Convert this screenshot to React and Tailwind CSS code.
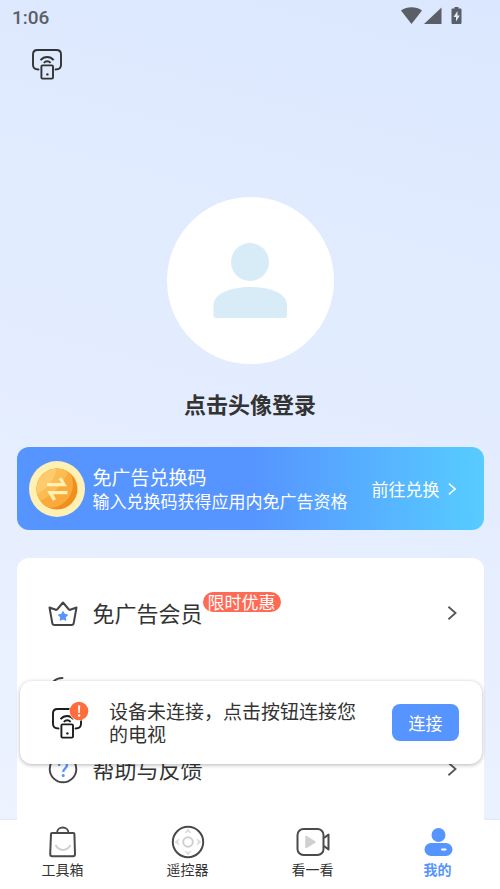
import clsx from 'clsx';

const CastIcon = ({ className }) => (
  <svg viewBox="0 0 32 32" fill="none" stroke="currentColor" strokeWidth="1.9" className={className}>
    <path d="M7.5 21.5C3.6 21.5 2 20 2 17V6.500C2 3.500 3.500 2 6.500 2h19C28.500 2 30 3.500 30 6.500V17c0 3-1.600 4.500-5.500 4.500" strokeLinecap="round" />
    <path d="M9.500 12.200c3.800-4.200 9.600-4.200 13.200 0" />
    <path d="M12.800 14.800c2-2 5-2 6.800 0" />
    <rect x="10.400" y="17.400" width="11.600" height="13.200" rx="1.200" />
    <circle cx="16.400" cy="26.400" r="1.200" fill="currentColor" stroke="none" />
  </svg>
);

const ChevronIcon = ({ className }) => (
  <svg viewBox="0 0 12 18" fill="none" stroke="currentColor" strokeWidth="2" className={className}>
    <path d="M2 2l8 7-8 7" />
  </svg>
);

const CoinIcon = () => (
  <svg viewBox="0 0 56 56" className="size-14 shrink-0">
    <defs>
      <clipPath id="coin-face">
        <circle cx="28" cy="28" r="20.500" />
      </clipPath>
    </defs>
    <circle cx="28" cy="28" r="28" fill="#fff0b3" />
    <g clipPath="url(#coin-face)">
      <rect width="56" height="56" fill="#f08f1d" />
      <circle cx="20" cy="23" r="24" fill="#f9aa3b" />
      <path d="M0 0h42C38 22 24 36 5 42z" fill="#fbbc54" />
      <path d="M0 0h29C28 16 20 28 6 34z" fill="#fdca6c" />
    </g>
    <path
      d="M18 25.200v-3.200h14.500l-3-4 3-1.500 5.500 8.700zM38.500 30v3.200H24.300l2.700 5-3 1.600-5.800-9.800z"
      fill="#fff0b3"
    />
  </svg>
);

const CrownIcon = () => (
  <svg viewBox="0 0 30 30" fill="none" className="size-[30px]">
    <path
      d="M1.500 9.500l6.300 2.300c.5.200 1 .1 1.300-.3L15 4.500l5.900 7c.3.400.8.500 1.300.3l6.300-2.300-2.800 15.600c-.2 1.200-.9 1.900-2.100 1.900H6.400c-1.200 0-1.900-.7-2.100-1.900z"
      stroke="#444"
      strokeWidth="2"
      strokeLinejoin="round"
    />
    <path
      d="M15 13.500l1.500 2.800 3.100.6-2.200 2.300.4 3.100-2.800-1.300-2.800 1.300.4-3.100-2.200-2.300 3.100-.6z"
      fill="#5694ff"
      stroke="#5694ff"
      strokeLinejoin="round"
    />
  </svg>
);

const HistoryIcon = () => (
  <svg viewBox="0 0 30 30" fill="none" stroke="#444" strokeWidth="1.900" strokeLinecap="round" className="size-[30px]">
    <path d="M14.500 2C7 2 1.500 7.500 1.500 15S7.500 28.500 15 28.500 28.500 22.500 28.500 15" />
  </svg>
);

const HelpIcon = () => (
  <svg viewBox="0 0 30 30" fill="none" strokeWidth="1.900" className="size-[30px]">
    <circle cx="15" cy="15" r="13.300" stroke="#444" />
    <path d="M11 12c0-5.300 8-5.300 8-.7 0 3-3.800 3.200-3.800 6.700" stroke="#5694ff" strokeWidth="2.200" />
    <circle cx="15.200" cy="21.500" r="1.500" fill="#5694ff" />
  </svg>
);

const BagIcon = () => (
  <svg viewBox="0 0 34 34" fill="none" stroke="#4a4a4a" strokeWidth="2" className="size-[34px]">
    <path d="M11 8c0-7.200 11.500-7.200 11.500 0" />
    <path d="M6 8h21.400c.6 0 1 .4 1 1l.6 20c0 1.500-.8 2.300-2 2.300H6.200c-1.200 0-2-.8-2-2.300L5 9c0-.6.400-1 1-1z" />
    <path d="M9.500 20c3.500 6.500 11.500 6.500 15 0" stroke="#d0d0d0" />
  </svg>
);

const RemoteIcon = () => (
  <svg viewBox="0 0 34 34" fill="none" className="size-[34px]">
    <circle cx="17" cy="17" r="15.200" stroke="#4a4a4a" strokeWidth="2" />
    <circle cx="17" cy="17" r="4.800" stroke="#d0d0d0" strokeWidth="2" />
    <path
      d="M14 8l3-4 3 4-3-1.500zM14 26l3 4 3-4-3 1.500zM8 14l-4 3 4 3-1.500-3zM26 14l4 3-4 3 1.500-3z"
      fill="#dcdcdc"
      stroke="#dcdcdc"
      strokeWidth="0.800"
    />
  </svg>
);

const VideoIcon = () => (
  <svg viewBox="0 0 34 34" fill="none" stroke="#4a4a4a" strokeWidth="2" className="size-[34px]">
    <rect x="1.500" y="4" width="26" height="26" rx="6" />
    <path d="M28 13l4.500-3.500v15L28 21" strokeLinejoin="round" />
    <path d="M10 11.500v11l9-5.500z" fill="#d0d0d0" stroke="#d0d0d0" strokeWidth="1.500" strokeLinejoin="round" />
  </svg>
);

const MineIcon = () => (
  <svg viewBox="0 0 34 34" className="size-[34px]" fill="#5694ff">
    <circle cx="17.500" cy="10" r="7" />
    <rect x="3.500" y="18" width="28" height="13" rx="6.500" />
    <rect x="20" y="23.500" width="5.500" height="2" rx="1" fill="#fff" />
  </svg>
);

const menuItems = [
  { id: 'vip', label: '免广告会员', badge: '限时优惠', icon: CrownIcon },
  { id: 'history', label: '', icon: HistoryIcon },
  { id: 'help', label: '帮助与反馈', icon: HelpIcon },
];

const tabs = [
  { label: '工具箱', icon: BagIcon },
  { label: '遥控器', icon: RemoteIcon },
  { label: '看一看', icon: VideoIcon },
  { label: '我的', icon: MineIcon, active: true },
];

const StatusBar = () => (
  <div className="flex h-8 shrink-0 items-center justify-between pr-9 pl-3 text-[#5a5f67]">
    <span className="pt-1 font-['Roboto',sans-serif] text-[19px] font-medium">1:06</span>
    <svg viewBox="0 0 64 20" fill="currentColor" className="h-5 w-16">
      <path d="M1 4.500C7 .2 16 .2 22 4.500L11.500 18z" />
      <path d="M41.500 1.500V18H24z" />
      <path d="M54.500 1h4v1.500h1.700c.8 0 1.300.5 1.300 1.300v12.900c0 .8-.5 1.300-1.300 1.300h-7.400c-.8 0-1.300-.5-1.300-1.300V3.800c0-.8.5-1.300 1.300-1.300h1.700z" />
      <path d="M57.500 5l-4 6h2.500v4.500l3.800-6h-2.300z" fill="#e0eaff" />
    </svg>
  </div>
);

const MenuRow = ({ label, badge, icon: Icon }) => (
  <li>
    <button type="button" className="flex h-[78px] w-full items-center pr-6 pl-[31px] text-left text-[#555]">
      <Icon />
      <span className="ml-[15px] pb-0.5 text-[22px] leading-8 text-[#333]">{label}</span>
      {badge && (
        <span className="mb-[22px] flex h-5 items-center rounded-full bg-[#ff6a55] px-[5px] text-[17px] text-white">
          {badge}
        </span>
      )}
      <ChevronIcon className="ml-auto h-4 w-4" />
    </button>
  </li>
);

const ConnectToast = () => (
  <div
    role="status"
    className="absolute right-[18px] bottom-14 left-5 flex h-[83px] items-center rounded-xl bg-white pr-[23px] pl-[31px] shadow-[0_1px_4px_rgba(0,0,0,0.3)]"
  >
    <div className="relative shrink-0 text-[#1c1c1c]">
      <CastIcon className="size-8" />
      <svg viewBox="0 0 20 20" className="absolute -top-1.5 -right-1.5 size-5">
        <circle cx="10" cy="10" r="10" fill="#fff" />
        <circle cx="10" cy="10" r="9.300" fill="#ff6d3c" />
        <path d="M9 4.500h2.200l-.4 7.500H9.400z" fill="#fff" />
        <circle cx="10.100" cy="14.500" r="1.200" fill="#fff" />
      </svg>
    </div>
    <p className="mr-5 mb-0.5 ml-[26px] flex-1 text-[19px] leading-[23px] text-[#333]">
      设备未连接，点击按钮连接您的电视
    </p>
    <button type="button" className="h-[37px] w-[67px] shrink-0 rounded-lg bg-[#5694ff] text-[17px] text-white">
      连接
    </button>
  </div>
);

export default function App() {
  return (
    <div className="flex h-screen flex-col overflow-hidden bg-[linear-gradient(195deg,#dbe7fe_0%,#e0ebff_25%,#e4edff_50%,#eef4ff_100%)] font-['Noto_Sans_CJK_SC',sans-serif]">
      <StatusBar />

      <div className="relative flex min-h-0 flex-1 flex-col">
        <main className="min-h-0 flex-1 overflow-hidden">
          <header className="px-[31px] pt-4">
            <button type="button" aria-label="投屏" className="block text-[#333]">
              <CastIcon className="size-8" />
            </button>
          </header>

          <button type="button" className="mx-auto mt-[117px] flex flex-col items-center">
            <span className="flex size-[167px] items-center justify-center rounded-full bg-white">
              <svg viewBox="0 0 74 76" fill="#d8ecf7" className="h-[76px] w-[74px]">
                <circle cx="37" cy="19" r="19" />
                <path d="M.5 62C.5 38 74 38 74 62v10.500c0 1.500-1 2.500-2.500 2.500H3C1.500 75 .5 74 .5 72.500z" />
              </svg>
            </span>
            <span className="mt-6 text-[22px] leading-[30px] font-bold text-[#333]">点击头像登录</span>
          </button>

          <button
            type="button"
            className="mx-auto mt-[29px] flex h-[83px] w-[calc(100%-33px)] items-center rounded-xl bg-[linear-gradient(90deg,#5694ff_50%,#57ccff_100%)] pr-6 pl-3 text-left text-white"
          >
            <CoinIcon />
            <span className="ml-2 flex flex-col">
              <span className="text-[19px] leading-6">免广告兑换码</span>
              <span className="text-[17px] leading-6">输入兑换码获得应用内免广告资格</span>
            </span>
            <span className="ml-auto text-[17px] whitespace-nowrap">前往兑换</span>
            <ChevronIcon className="ml-1 h-[14px] w-4" />
          </button>

          <ul className="mx-auto mt-7 w-[calc(100%-33px)] rounded-xl bg-white py-4 pb-24">
            {menuItems.map((item) => (
              <MenuRow key={item.id} {...item} />
            ))}
          </ul>
        </main>

        <ConnectToast />
      </div>

      <nav className="grid h-[69px] shrink-0 grid-cols-4 bg-white shadow-[0_-1px_2px_rgba(0,0,0,0.05)]">
        {tabs.map(({ label, icon: Icon, active }) => (
          <a
            key={label}
            href="#"
            aria-current={active ? 'page' : undefined}
            className={clsx(
              'flex flex-col items-center pt-[5px] text-[14px] leading-5',
              active ? 'font-bold text-[#5694ff]' : 'text-[#333]',
            )}
          >
            <Icon />
            {label}
          </a>
        ))}
      </nav>
    </div>
  );
}
